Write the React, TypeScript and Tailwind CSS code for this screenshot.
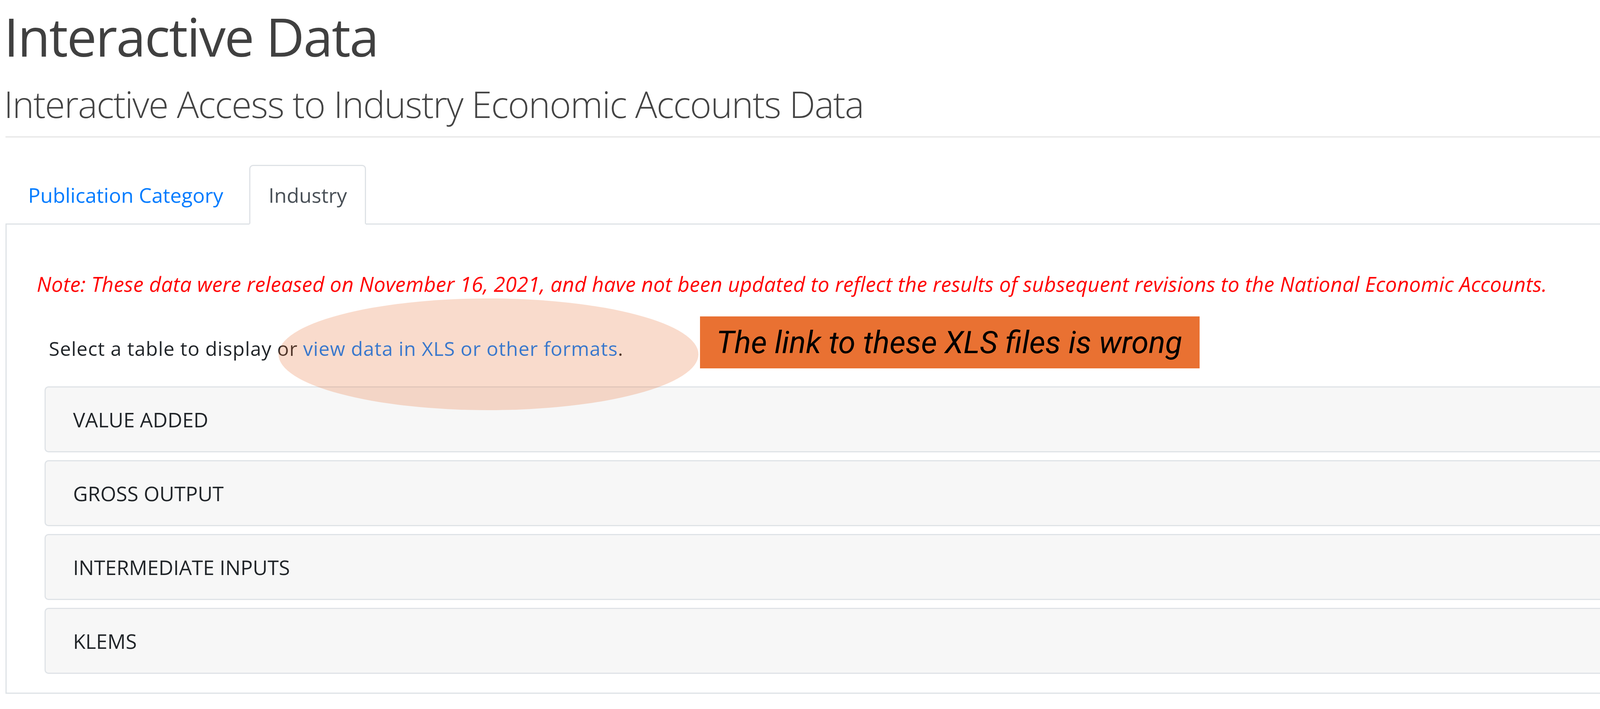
const sections = ["VALUE ADDED", "GROSS OUTPUT", "INTERMEDIATE INPUTS", "KLEMS"];

export default function App() {
  return (
    <div className="relative w-[4266px] h-[1815px] overflow-hidden bg-white font-['Open_Sans',sans-serif]">
      <div className="pl-[14px]">
        <h1 className="-ml-[4px] text-[136px] leading-[186px] tracking-[-0.021em] font-normal text-[#404040]">
          Interactive Data
        </h1>
        <h2 className="mt-[25px] -ml-[4px] text-[94px] leading-[110px] tracking-[-0.02em] font-light text-[#444]">
          Interactive Access to Industry Economic Accounts Data
        </h2>
        <div className="mt-[28px] h-[3px] bg-[#e6e6e6]" />

        <ul className="mt-[70px] flex border-b-[3px] border-[#dee2e6] text-[52px] leading-[71px]">
          <li className="-mb-[3px]">
            <a className="block border-[3px] border-transparent pl-[55px] pr-[52px] py-[38px] text-[#007bff]">
              Publication Category
            </a>
          </li>
          <li className="-mb-[3px] ml-[11px]">
            <a className="block rounded-t-[10px] border-[3px] border-[#dee2e6] border-b-white bg-white pl-[47px] pr-[46px] py-[38px] text-[#495057]">
              Industry
            </a>
          </li>
        </ul>

        <div className="border-l-[3px] border-b-[3px] border-[#dee2e6] pl-[77px] pt-[114px] pb-[48px]">
          <p className="text-[53px] leading-[75px] italic tracking-[0.005em] text-[#ff0000]">
            Note: These data were released on November 16, 2021, and have not been updated to reflect the results of subsequent revisions to the National Economic Accounts.
          </p>
          <p className="mt-[94px] ml-[31px] text-[50px] leading-[69px] tracking-[0.02em] text-[#212529]">
            Select a table to display or <a className="text-[#007bff]">view data in XLS or other formats</a>.
          </p>
          <div className="mt-[62px] ml-[20px] flex flex-col gap-[20px]">
            {sections.map((s) => (
              <div
                key={s}
                className="flex h-[169px] items-center rounded-l-[10px] border-[3px] border-r-0 border-[#dfe3e7] bg-[#f7f7f7] pl-[70px] text-[52px] text-[#212529]"
              >
                {s}
              </div>
            ))}
          </div>
        </div>
      </div>

      {/* annotation overlay */}
      <div className="absolute left-[713px] top-[764px] h-[286px] w-[1075px] rounded-[50%] bg-[#e97132]/25" />
      <div className="absolute left-[1792px] top-[810px] flex h-[133px] w-[1279px] items-center bg-[#e97132] pl-[42px] font-['Roboto',sans-serif] text-[79.5px] italic text-black">
        The link to these XLS files is wrong
      </div>
    </div>
  );
}
